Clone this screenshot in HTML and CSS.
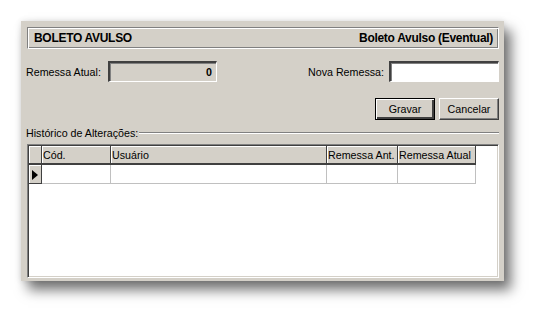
FILE: index.html
```html
<!DOCTYPE html>
<html>
<head>
<meta charset="UTF-8">
<title>Boleto Avulso</title>
<link rel="stylesheet" href="styles.css">
</head>
<body>
<div class="janela">
	<div class="cabecalho">
		<span>BOLETO AVULSO</span>
		<span>Boleto Avulso (Eventual)</span>
	</div>

	<div class="linha-remessa">
		<div class="campo">
			<label for="remAtual">Remessa Atual:</label>
			<div class="caixa caixa-leitura" id="remAtual">0</div>
		</div>
		<div class="campo">
			<label for="novaRem">Nova Remessa:</label>
			<input type="text" class="caixa caixa-edit" id="novaRem">
		</div>
	</div>

	<div class="botoes">
		<button type="button" class="btn btn-padrao">Gravar</button>
		<button type="button" class="btn">Cancelar</button>
	</div>

	<div class="historico">
		<span>Histórico de Alterações:</span>
		<div class="risco"></div>
	</div>

	<div class="grade">
		<table>
			<tr class="tit">
				<td class="ind"></td>
				<td class="c1">Cód.</td>
				<td class="c2">Usuário</td>
				<td class="c3">Remessa Ant.</td>
				<td class="c4">Remessa Atual</td>
			</tr>
			<tr class="dado">
				<td class="ind"><span class="seta"></span></td>
				<td></td>
				<td></td>
				<td></td>
				<td></td>
			</tr>
		</table>
	</div>
</div>
</body>
</html>
```

FILE: styles.css
```css
html {background: #fff;}

body {margin: 0;
	min-height: 324px;
	padding-top: 21px;
	box-sizing: border-box;
	font-family: "Liberation Sans", Arial, sans-serif;
	font-size: 10.7px;
	color: #000;}

.janela {margin-left: 21px;
	width: 483px;
	height: 260px;
	box-sizing: border-box;
	padding: 6px 5px 3px 6px;
	background: #d4d0c8;
	display: flex;
	flex-direction: column;
	box-shadow: 7px 9px 12px rgba(0,0,0,0.55), 0 0 6px rgba(0,0,0,0.12);}

.cabecalho {height: 22px;
	box-sizing: border-box;
	border: 1px solid #808080;
	border-right-color: #fff;
	border-bottom-color: #fff;
	box-shadow: inset 1px 1px 0 #fff, inset -1px -1px 0 #808080;
	display: flex;
	justify-content: space-between;
	align-items: center;
	padding: 0 5px 0 6px;
	font-weight: bold;
	font-size: 12px;
	letter-spacing: -0.3px;}

.linha-remessa {margin-top: 12px;
	margin-left: -1px;
	height: 21px;
	display: flex;
	justify-content: space-between;}

.campo {display: flex;
	align-items: center;}

.campo label {margin-right: 5px;}

.caixa {box-sizing: border-box;
	width: 110px;
	height: 21px;
	border: 2px solid #404040;
	border-right: 1px solid #fff;
	border-bottom: 1px solid #fff;
	box-shadow: inset 1px 1px 0 #808080;
	font: inherit;
	margin: 0;
	padding: 0 4px;}

.caixa-leitura {width: 109px;
	margin-left: 2px;
	background: #d4d0c8;
	font-weight: bold;
	text-align: right;
	line-height: 18px;}

.caixa-edit {background: #fff;
	outline: none;}

.botoes {margin-top: 16px;
	display: flex;
	justify-content: flex-end;
	gap: 4px;}

.btn {width: 60px;
	height: 22px;
	box-sizing: border-box;
	margin: 0;
	padding: 0;
	font: inherit;
	color: #000;
	background: #d4d0c8;
	border: 1px solid #fff;
	border-right-color: #404040;
	border-bottom-color: #404040;
	box-shadow: inset -1px -1px 0 #808080;}

.btn-padrao {border: 1px solid #000;
	box-shadow: inset 1px 1px 0 #fff, inset -2px -2px 0 #404040;}

.historico {margin-top: 6px;
	margin-left: -1px;
	height: 13px;
	display: flex;
	align-items: center;}

.risco {flex: 1;
	margin-left: 1px;
	border-top: 1px solid #808080;
	border-bottom: 1px solid #fff;}

.grade {margin-top: 5px;
	flex: 1;
	box-sizing: border-box;
	background: #fff;
	border: 1px solid #808080;
	border-right-color: #fff;
	border-bottom-color: #fff;
	box-shadow: inset 1px 1px 0 #404040, inset -1px -1px 0 #d4d0c8;
	padding: 1px 0 0 1px;}

table {border-collapse: collapse;
	table-layout: fixed;}

td {padding: 0 0 0 1px;
	white-space: nowrap;
	overflow: hidden;}

tr.tit td {height: 17px;
	background: #d4d0c8;
	border-right: 1px solid #404040;
	border-bottom: 2px solid #404040;
	box-shadow: inset 1px 1px 0 #fff;}

tr.dado td {height: 18px;
	border-right: 1px solid #c0c0c0;
	border-bottom: 1px solid #c0c0c0;}

tr.dado td.ind {background: #d4d0c8;
	border-right: 1px solid #404040;
	border-bottom: 1px solid #404040;
	box-shadow: inset 1px 1px 0 #fff;
	padding: 0;
	text-align: center;}

.ind {width: 11px;}
.c1 {width: 67px;}
.c2 {width: 214px;}
.c3 {width: 69px;}
.c4 {width: 76px;}

.seta {display: inline-block;
	width: 0;
	height: 0;
	border-top: 5px solid transparent;
	border-bottom: 5px solid transparent;
	border-left: 6px solid #000;
	vertical-align: middle;}
```
